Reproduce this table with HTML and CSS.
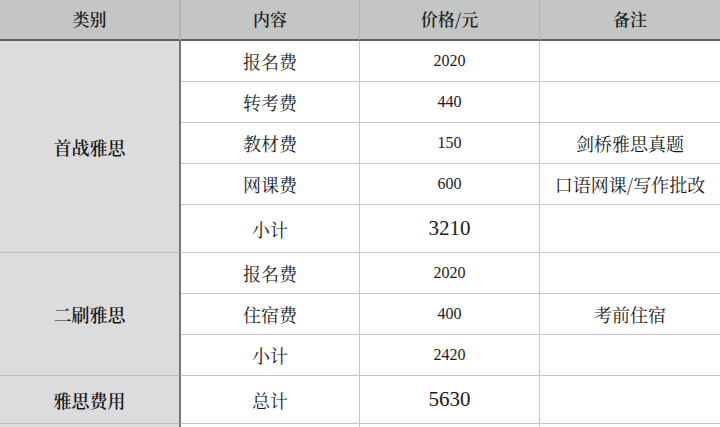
FILE: index.html
```html
<!DOCTYPE html>
<html lang="zh">
<head>
<meta charset="utf-8">
<link rel="stylesheet" href="styles.css">
</head>
<body>
<div class="sheet">
  <div class="cell head c1">类别</div>
  <div class="cell head">内容</div>
  <div class="cell head">价格/元</div>
  <div class="cell head c4">备注</div>

  <div class="cell cat span5">首战雅思</div>
  <div class="cell">报名费</div>
  <div class="cell num">2020</div>
  <div class="cell c4"></div>

  <div class="cell">转考费</div>
  <div class="cell num">440</div>
  <div class="cell c4"></div>

  <div class="cell">教材费</div>
  <div class="cell num">150</div>
  <div class="cell c4">剑桥雅思真题</div>

  <div class="cell">网课费</div>
  <div class="cell num">600</div>
  <div class="cell c4">口语网课/写作批改</div>

  <div class="cell">小计</div>
  <div class="cell num big">3210</div>
  <div class="cell c4"></div>

  <div class="cell cat span3">二刷雅思</div>
  <div class="cell">报名费</div>
  <div class="cell num">2020</div>
  <div class="cell c4"></div>

  <div class="cell">住宿费</div>
  <div class="cell num">400</div>
  <div class="cell c4">考前住宿</div>

  <div class="cell">小计</div>
  <div class="cell num">2420</div>
  <div class="cell c4"></div>

  <div class="cell cat">雅思费用</div>
  <div class="cell">总计</div>
  <div class="cell num big">5630</div>
  <div class="cell c4"></div>

  <div class="cell cat tail"></div>
  <div class="cell tail"></div>
  <div class="cell tail"></div>
  <div class="cell c4 tail"></div>
</div>
</body>
</html>
```

FILE: styles.css
```css
html, body {
  margin: 0;
  padding: 0;
  background: #ffffff;
  overflow: hidden;
}

.sheet {
  display: grid;
  grid-template-columns: 181px 179px 180px 179px 1px;
  grid-template-rows: 41px 41px 41px 41px 41px 48px 41px 41px 41px 48px 3px;
  width: 720px;
  font-family: "Noto Serif CJK SC", "Noto Sans CJK SC", serif;
  color: #1a1a1a;
  font-size: 18px;
}

.cell {
  box-sizing: border-box;
  display: flex;
  align-items: center;
  justify-content: center;
  border-right: 1px solid #c6c6c6;
  border-bottom: 1px solid #c6c6c6;
}

.c4 {
  grid-column: 4 / 6;
  border-right: none;
}

.head {
  background: #c4c6c5;
  border-bottom: 2px solid #5e605f;
  border-right: 1px solid #b3b5b4;
  font-size: 17px;
  font-weight: 600;
  color: #222222;
  padding-bottom: 2px;
}

.head.c1 {
  border-right: 2px solid #b3b5b4;
}

.head.c4 {
  border-right: none;
}

.cat {
  grid-column: 1;
  background: #dcdcdc;
  border-right: 2px solid #767676;
  border-bottom: 1px solid #bdbdbd;
  font-weight: 600;
}

.span5 {
  grid-row: span 5;
}

.span3 {
  grid-row: span 3;
}

.tail {
  border-bottom: none;
}

.num {
  font-family: "Liberation Serif", serif;
  font-size: 16px;
}

.big {
  font-size: 21px;
}
```
